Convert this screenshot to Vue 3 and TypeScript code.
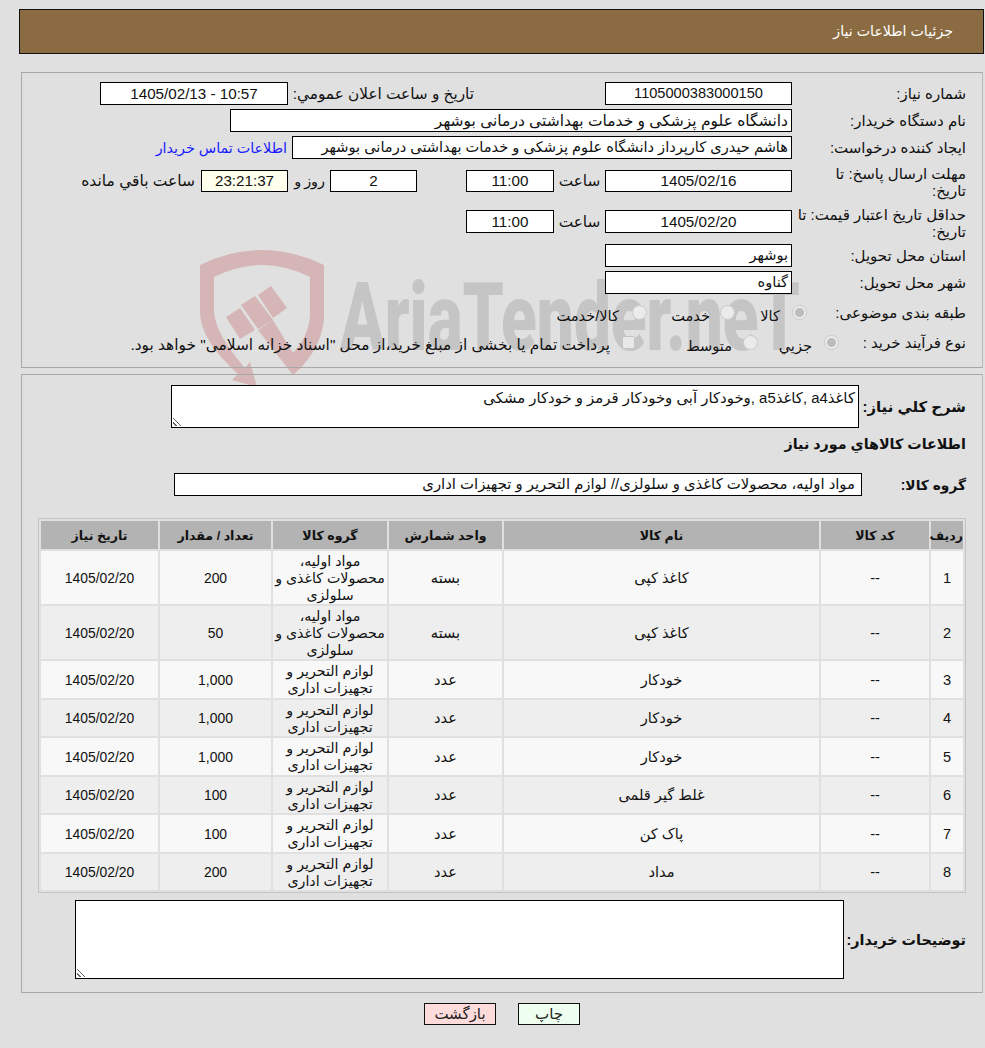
<script setup lang="ts">
interface Row {
  n: number
  name: string
  unit: string
  group: string[]
  qty: string
  tall: boolean
}
const g1 = ['مواد اولیه،', 'محصولات کاغذی و', 'سلولزی']
const g2 = ['لوازم التحریر و', 'تجهیزات اداری']
const rows: Row[] = [
  { n: 1, name: 'کاغذ کپی', unit: 'بسته', group: g1, qty: '200', tall: true },
  { n: 2, name: 'کاغذ کپی', unit: 'بسته', group: g1, qty: '50', tall: true },
  { n: 3, name: 'خودکار', unit: 'عدد', group: g2, qty: '1,000', tall: false },
  { n: 4, name: 'خودکار', unit: 'عدد', group: g2, qty: '1,000', tall: false },
  { n: 5, name: 'خودکار', unit: 'عدد', group: g2, qty: '1,000', tall: false },
  { n: 6, name: 'غلط گیر قلمی', unit: 'عدد', group: g2, qty: '100', tall: false },
  { n: 7, name: 'پاک کن', unit: 'عدد', group: g2, qty: '100', tall: false },
  { n: 8, name: 'مداد', unit: 'عدد', group: g2, qty: '200', tall: false }
]
</script>

<template>
  <div class="page" dir="rtl">
    <svg class="mark" width="640" height="140" viewBox="0 0 640 140">
      <path class="pink" d="M0 15 Q62 -15 124 15 L124 70 Q120 102 93 125 L58 80 L73 70 L93 103 Q110 85 110 62 L110 27 Q62 3 14 27 L14 62 Q16 85 45 118 L50 112 L57 137 L32 130 L38 124 Q0 90 0 62 Z" />
      <polygon class="pink" points="26,67 40,58 55,80 40,89" />
      <polygon class="pink" points="41,55 55,46 73,70 58,79" />
      <polygon class="pink" points="58,45 71,36 87,58 73,68" />
      <text class="wm" x="140" y="100" textLength="460" lengthAdjust="spacingAndGlyphs">AriaTender.neT</text>
    </svg>

    <header class="title">جزئیات اطلاعات نیاز</header>

    <section class="panel top">
      <div class="row">
        <label class="lab">شماره نیاز:</label>
        <div class="box wide center id">1105000383000150</div>
        <label class="lab-b">تاریخ و ساعت اعلان عمومي:</label>
        <div class="box pub center" dir="ltr">1405/02/13 - 10:57</div>
      </div>
      <div class="row">
        <label class="lab">نام دستگاه خریدار:</label>
        <div class="box org">دانشگاه علوم پزشکی و خدمات بهداشتی درمانی بوشهر</div>
      </div>
      <div class="row">
        <label class="lab">ایجاد کننده درخواست:</label>
        <div class="box creator">هاشم حیدری کارپرداز دانشگاه علوم پزشکی و خدمات بهداشتی درمانی بوشهر</div>
        <a class="link">اطلاعات تماس خریدار</a>
      </div>
      <div class="row two first-two">
        <label class="lab">مهلت ارسال پاسخ: تا<br />تاریخ:</label>
        <div class="box wide center short">1405/02/16</div>
        <span class="t-lab">ساعت</span>
        <div class="box time center short">11:00</div>
        <div class="box days center short">2</div>
        <span class="roz">روز و</span>
        <div class="box timer center short">23:21:37</div>
        <span class="rem">ساعت باقي مانده</span>
      </div>
      <div class="row two second-two">
        <label class="lab">حداقل تاریخ اعتبار قیمت: تا<br />تاریخ:</label>
        <div class="box wide center">1405/02/20</div>
        <span class="t-lab">ساعت</span>
        <div class="box time center">11:00</div>
      </div>
      <div class="row province">
        <label class="lab">استان محل تحویل:</label>
        <div class="box wide">بوشهر</div>
      </div>
      <div class="row">
        <label class="lab">شهر محل تحویل:</label>
        <div class="box wide">گناوه</div>
      </div>
      <div class="row radios cat">
        <label class="lab lab-cat">طبقه بندی موضوعی:</label>
        <span class="radio on"></span><span class="opt o1">کالا</span>
        <span class="radio r2"></span><span class="opt o2">خدمت</span>
        <span class="radio r3"></span><span class="opt o3">کالا/خدمت</span>
      </div>
      <div class="row radios proc">
        <label class="lab lab-proc">نوع فرآیند خرید :</label>
        <span class="radio on"></span><span class="opt p-o1">جزيي</span>
        <span class="radio p2"></span><span class="opt p-o2">متوسط</span>
        <span class="check"></span>
        <span class="opt long">پرداخت تمام یا بخشی از مبلغ خرید،از محل "اسناد خزانه اسلامی" خواهد بود.</span>
      </div>
    </section>

    <section class="panel bottom">
      <div class="desc">
        <label class="lab-bold l-desc">شرح کلي نیاز:</label>
        <div class="area a1">کاغذa4 ,کاغذa5 ,وخودکار آبی وخودکار قرمز و خودکار مشکی<i class="grip"></i></div>
      </div>
      <h2 class="info">اطلاعات کالاهاي مورد نیاز</h2>
      <div class="grp">
        <label class="lab-bold l-grp">گروه کالا:</label>
        <div class="box grp-box">مواد اولیه، محصولات کاغذی و سلولزی// لوازم التحریر و تجهیزات اداری</div>
      </div>
      <table class="grid">
        <colgroup>
          <col class="c1" /><col class="c2" /><col class="c3" /><col class="c4" /><col class="c5" /><col class="c6" /><col class="c7" />
        </colgroup>
        <thead>
          <tr>
            <th>ردیف</th><th>کد کالا</th><th>نام کالا</th><th>واحد شمارش</th><th>گروه کالا</th><th>تعداد / مقدار</th><th>تاریخ نیاز</th>
          </tr>
        </thead>
        <tbody>
          <tr v-for="r in rows" :key="r.n" :class="{ tall: r.tall }">
            <td>{{ r.n }}</td>
            <td>--</td>
            <td>{{ r.name }}</td>
            <td>{{ r.unit }}</td>
            <td><span v-for="line in r.group" :key="line" class="gline">{{ line }}</span></td>
            <td class="num">{{ r.qty }}</td>
            <td class="num">1405/02/20</td>
          </tr>
        </tbody>
      </table>
      <div class="buyer">
        <label class="lab-bold l-buyer">توضیحات خریدار:</label>
        <div class="area a2"><i class="grip"></i></div>
      </div>
    </section>

    <div class="actions">
      <button class="btn back">بازگشت</button>
      <button class="btn print">چاپ</button>
    </div>
  </div>
</template>

<style>
html, body { margin: 0; background: #e0e0e0; }
</style>

<style scoped>
.page {
  position: relative;
  width: 985px;
  height: 1048px;
  box-sizing: border-box;
  padding-top: 9px;
  background: #e0e0e0;
  font-family: "Liberation Sans", "DejaVu Sans", sans-serif;
  font-size: 14.6px;
  color: #111;
  overflow: hidden;
}
.mark { position: absolute; left: 200px; top: 250px; direction: ltr; }
.pink { fill: #d5b5b5; }
.wm { font-family: "Roboto", sans-serif; font-weight: 900; font-size: 94px; fill: #c5c5c5; direction: ltr; }
.title {
  position: relative;
  box-sizing: border-box;
  margin: 0 1px 0 19px;
  height: 45px;
  padding: 13px 30px 0 0;
  background: #8b6c42;
  border: 1px solid #111;
  color: #fff;
  font-size: 14.2px;
}
.panel {
  position: relative;
  box-sizing: border-box;
  width: 962px;
  margin-right: 2px;
  border: 1px solid;
  border-color: #a8a8a8 #b8b8b8 #a8a8a8 #a8a8a8;
}
.top { height: 296px; margin-top: 18px; padding-top: 9px; }
.bottom { height: 619px; margin-top: 6px; padding-top: 10px; }
.row { display: flex; align-items: center; height: 23px; margin-bottom: 4px; padding-right: 16px; }
.lab { width: 174px; flex: none; line-height: 17px; font-size: 15px; white-space: nowrap; }
.box {
  box-sizing: border-box;
  height: 23px;
  line-height: 21px;
  background: #fff;
  border: 1px solid #000;
  padding: 0 3px;
  flex: none;
  white-space: nowrap;
  overflow: hidden;
}
.center { text-align: center; font-size: 15.2px; }
.id { font-size: 14.6px; }
.wide { width: 187px; }
.lab-b { margin-right: 131px; width: 181px; text-align: right; font-size: 15.3px; white-space: nowrap; }
.pub { width: 188px; margin-right: 5px; }
.org { width: 562px; font-size: 15.5px; }
.creator { width: 500px; }
.link { color: #1a1aff; margin-right: 5px; white-space: nowrap; font-size: 14.3px; }
.two { margin-bottom: 0; }
.two .lab { position: relative; top: 1px; }
.first-two { margin-top: 11px; height: 22px; }
.short { height: 22px; line-height: 20px; }
.second-two { margin-top: 18px; }
.province { margin-top: 11px; }
.t-lab { width: 51px; text-align: center; flex: none; font-size: 15.3px; }
.time { width: 88px; }
.days { width: 87px; margin-right: 49px; }
.roz { width: 42px; flex: none; padding-right: 5px; box-sizing: border-box; font-size: 14.4px; word-spacing: -1px; }
.timer { width: 87px; background: #ffffee; }
.rem { margin-right: 6px; white-space: nowrap; font-size: 15.5px; }
.cat { margin-top: 7px; }
.proc { margin-top: 7px; }
.lab-cat { width: 159px; }
.lab-proc { width: 127px; }
.radio {
  box-sizing: border-box;
  width: 15px; height: 15px;
  border-radius: 50%;
  border: 1px solid #cacaca;
  background: #ebebeb;
  flex: none;
}
.radio.on { background: radial-gradient(circle, #bcbcbc 0 4px, #ececec 5px); }
.check {
  box-sizing: border-box;
  width: 13px; height: 13px;
  margin-right: 52px;
  border: 1px solid #c4c4c4;
  border-radius: 2px;
  background: #e8e8e8;
  flex: none;
}
.opt { white-space: nowrap; margin-top: 5px; flex: none; }
.o1 { margin-right: 12px; width: 20px; }
.r2 { margin-right: 25px; }
.o2 { margin-right: 10px; width: 39px; }
.r3 { margin-right: 24px; }
.o3 { margin-right: 13px; }
.p-o1 { margin-right: 12px; width: 34px; }
.p2 { margin-right: 20px; }
.p-o2 { margin-right: 11px; width: 45px; }
.long { margin-right: 12px; font-size: 15.4px; }
.lab-bold { font-weight: 700; white-space: nowrap; flex: none; font-size: 14.4px; }
.desc { display: flex; align-items: center; padding-right: 16px; }
.l-desc { width: 107px; font-size: 14.9px; }
.area {
  position: relative;
  box-sizing: border-box;
  background: #fff;
  border: 1px solid #000;
  padding: 2px 3px;
}
.a1 { width: 688px; height: 43px; line-height: 20px; font-size: 14.9px; }
.grip {
  position: absolute;
  left: 1px; bottom: 1px;
  width: 10px; height: 10px;
  background: repeating-linear-gradient(45deg, transparent 0 2px, #666 2px 3px);
  clip-path: polygon(0 0, 100% 100%, 0 100%);
}
.info { margin: 6px 16px 0 0; font-size: 14.3px; font-weight: 700; line-height: 20px; }
.grp { display: flex; align-items: center; margin-top: 19px; padding-right: 16px; }
.l-grp { width: 104px; font-size: 13.8px; }
.grp-box { width: 688px; padding: 0 6px; font-size: 14.85px; }
.grid {
  margin: 22px 16px 0 0;
  width: 927px;
  table-layout: fixed;
  border-collapse: separate;
  border-spacing: 2px;
  border: 1px solid #c4c4c4;
  text-align: center;
  font-size: 14.6px;
  box-sizing: border-box;
}
.c1 { width: 32px; } .c2 { width: 108px; } .c3 { width: 315px; } .c4 { width: 113px; }
.c5 { width: 114px; } .c6 { width: 111px; } .c7 { width: 117px; }
.grid th { background: #b3b3b3; height: 28px; padding: 0; font-size: 12.6px; white-space: nowrap; }
.grid td { box-sizing: border-box; background: #f8f8f8; height: 36.5px; padding: 2px 0 0; line-height: 17px; }
.grid tr.tall td { height: 53px; }
.grid tbody tr:nth-child(even) td { background: #eeeeee; }
.gline { display: block; white-space: nowrap; font-size: 14.2px; }
.grid td.num { font-size: 13.9px; }
.buyer { display: flex; align-items: center; padding-right: 16px; margin-top: 7px; }
.l-buyer { width: 122px; }
.a2 { width: 769px; height: 79px; }
.actions { position: relative; display: flex; justify-content: center; gap: 22px; margin-top: 10px; padding-left: 19px; }
.btn {
  box-sizing: border-box;
  height: 22px;
  border: 1px solid #111;
  padding: 0;
  font: inherit;
  font-size: 15px;
  color: #222;
}
.back { width: 72px; background: #ffdcdc; order: 2; }
.print { width: 62px; background: #efffef; order: 1; }
</style>
